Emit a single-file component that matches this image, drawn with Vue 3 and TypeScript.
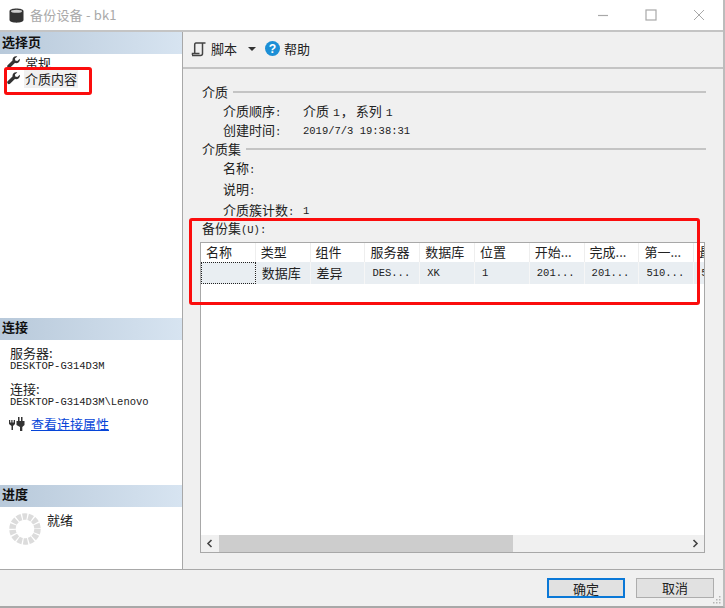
<script setup lang="ts">
interface Col { label: string; value: string; latin?: boolean }
const cols: Col[] = [
  { label: '名称', value: '' },
  { label: '类型', value: '数据库' },
  { label: '组件', value: '差异' },
  { label: '服务器', value: 'DES...', latin: true },
  { label: '数据库', value: 'XK', latin: true },
  { label: '位置', value: '1', latin: true },
  { label: '开始...', value: '201...', latin: true },
  { label: '完成...', value: '201...', latin: true },
  { label: '第一...', value: '510...', latin: true },
  { label: '最', value: '5', latin: true },
]
</script>

<template>
  <div class="window">
    <header class="titlebar">
      <svg width="15" height="15" viewBox="0 0 15 15">
        <path d="M0.500 3C0.500 -0.500 14.500 -0.500 14.500 3V12C14.500 15.500 0.500 15.500 0.500 12Z" fill="#333" />
        <ellipse cx="7.500" cy="3.200" rx="5.500" ry="1.500" fill="#cfcfcf" />
      </svg>
      <span class="title">备份设备 - bk1</span>
      <div class="winctl">
        <svg width="12" height="12" viewBox="0 0 12 12"><path d="M1 6.500H11" stroke="#a8a8a8" stroke-width="1.200" /></svg>
        <svg width="12" height="12" viewBox="0 0 12 12"><rect x="1" y="1" width="10" height="10" fill="none" stroke="#a8a8a8" stroke-width="1.200" /></svg>
        <svg width="12" height="12" viewBox="0 0 12 12"><path d="M1 1L11 11M11 1L1 11" stroke="#a8a8a8" stroke-width="1" /></svg>
      </div>
    </header>

    <div class="main">
      <aside class="side">
        <section class="pages">
          <h3 class="sidehead top">选择页</h3>
          <div class="navitem">
            <svg width="13" height="13" viewBox="0 0 13 13"><path d="M12.800 2.800 10.300 5 8.300 4.600 7.900 2.600 10.300 .4C7.600-.5 5.100 1.600 5.500 4.500L.6 9.300c-1.400 1.500.9 3.800 2.400 2.400L7.900 7C10.900 7.700 13.500 5.600 12.800 2.800Z" fill="#333" /></svg>
            <span>常规</span>
          </div>
          <div class="navitem second">
            <svg width="13" height="13" viewBox="0 0 13 13"><path d="M12.800 2.800 10.300 5 8.300 4.600 7.900 2.600 10.300 .4C7.600-.5 5.100 1.600 5.500 4.500L.6 9.300c-1.400 1.500.9 3.800 2.400 2.400L7.900 7C10.900 7.700 13.500 5.600 12.800 2.800Z" fill="#333" /></svg>
            <span class="selected">介质内容</span>
          </div>
        </section>

        <section class="conn">
          <h3 class="sidehead">连接</h3>
          <div class="connbody">
            <div class="k">服务器:</div>
            <div class="v">DESKTOP-G314D3M</div>
            <div class="k second">连接:</div>
            <div class="v">DESKTOP-G314D3M\Lenovo</div>
            <div class="linkrow">
              <svg width="16" height="14" viewBox="0 0 16 14" fill="#333">
                <path d="M0 3H1.200V5.500H2.300V3H3.500V5.500H4.700V3H6V7L4 9V13H2.500V9L0 7Z" />
                <path d="M9 0H10.500V4H12V0H13.500V4H15.500V8L13.300 10V14H11V10L7.500 8V4H9Z" />
              </svg>
              <a class="link">查看连接属性</a>
            </div>
          </div>
        </section>

        <section class="prog">
          <h3 class="sidehead">进度</h3>
          <div class="progbody">
            <svg width="32" height="32" viewBox="0 0 32 32">
              <circle cx="16" cy="16" r="12.500" fill="none" stroke="#dcdcdc" stroke-width="6.500" stroke-dasharray="4.400 1.210" />
            </svg>
            <span class="ready">就绪</span>
          </div>
        </section>
      </aside>

      <div class="right">
        <div class="toolbar">
          <svg class="scripticon" width="15" height="16" viewBox="0 0 15 16" fill="none" stroke="#444" stroke-width="1.500">
            <path d="M14.500 2H5C4 2 3.700 3 3.700 4V12.500" />
            <path d="M11.500 2V12.500C11.500 13.800 10.500 14.500 9.500 14.500H1C1.500 14.500 1.500 13 1.500 12.500H8.500" />
          </svg>
          <span>脚本</span>
          <i class="caret"></i>
          <svg width="15" height="15" viewBox="0 0 16 16">
            <circle cx="8" cy="8" r="8" fill="#1c8fd6" />
            <text x="8" y="13" text-anchor="middle" font-size="13" font-weight="700" fill="#fff" font-family="Liberation Sans, sans-serif">?</text>
          </svg>
          <span>帮助</span>
        </div>

        <div class="content">
          <div class="grouphead"><span>介质</span><i></i></div>
          <div class="line l1"><span class="lab">介质顺序<span class="mono">:</span></span><span class="val">介质 <span class="mono wide">1</span>，<span class="gap">系列</span> <span class="mono wide">1</span></span></div>
          <div class="line l2"><span class="lab">创建时间<span class="mono">:</span></span><span class="val mono">2019/7/3 19:38:31</span></div>
          <div class="grouphead g2"><span>介质集</span><i></i></div>
          <div class="line l3"><span class="lab">名称<span class="mono">:</span></span></div>
          <div class="line l3"><span class="lab">说明<span class="mono">:</span></span></div>
          <div class="line l3"><span class="lab">介质簇计数<span class="mono">:</span></span><span class="val mono">1</span></div>
          <div class="setlabel">备份集<span class="mono">(U):</span></div>

          <div class="table">
            <div class="thead">
              <div v-for="c in cols" :key="c.label" class="th">{{ c.label }}</div>
            </div>
            <div class="tbody">
              <div v-for="(c, i) in cols" :key="c.label" class="td" :class="{ focus: i === 0, mono: c.latin }">{{ c.value }}</div>
            </div>
            <div class="spacer"></div>
            <div class="scroll">
              <svg width="9" height="9" viewBox="0 0 9 9"><path d="M6 1 2.500 4.500 6 8" fill="none" stroke="#444" stroke-width="1.600" /></svg>
              <div class="track"><div class="thumb"></div></div>
              <svg width="9" height="9" viewBox="0 0 9 9"><path d="M3 1 6.500 4.500 3 8" fill="none" stroke="#444" stroke-width="1.600" /></svg>
            </div>
          </div>
        </div>
      </div>
    </div>

    <footer class="footer">
      <button class="btn primary">确定</button>
      <button class="btn">取消</button>
      <svg class="grip" width="10" height="10" viewBox="0 0 10 10" fill="#b5b5b5">
        <rect x="7" y="1" width="1.500" height="1.500" /><rect x="4" y="4" width="1.500" height="1.500" /><rect x="7" y="4" width="1.500" height="1.500" />
        <rect x="1" y="7" width="1.500" height="1.500" /><rect x="4" y="7" width="1.500" height="1.500" /><rect x="7" y="7" width="1.500" height="1.500" />
      </svg>
    </footer>

    <div class="mark mark-nav"></div>
    <div class="mark mark-table"></div>
  </div>
</template>

<style>
html, body { margin: 0; background: #fff; }
</style>

<style scoped>
.window {
  position: relative;
  width: 725px;
  height: 608px;
  box-sizing: border-box;
  overflow: hidden;
  display: flex;
  flex-direction: column;
  background: #fff;
  border-right: 2px solid #bcbcbc;
  border-bottom: 2px solid #a8a8a8;
  color: #222;
  font: 13px/18px "Noto Sans CJK SC", "Liberation Sans", sans-serif;
}
.titlebar {
  height: 32px;
  flex: none;
  display: flex;
  align-items: center;
  padding-left: 9px;
  box-sizing: border-box;
  border-bottom: 2px solid #c4c4c4;
}
.title { margin-left: 6px; font-size: 13px; color: #a9a9a9; letter-spacing: 0.2px; }
.winctl { margin-left: auto; display: flex; gap: 36px; padding-right: 18px; }
.main { flex: 1; min-height: 0; display: flex; }
.side {
  width: 183px;
  flex: none;
  box-sizing: border-box;
  border-right: 1px solid #a8a8a8;
  display: flex;
  flex-direction: column;
}
.sidehead {
  margin: 0;
  height: 22px;
  padding-left: 2px;
  font-size: 13px;
  line-height: 18px;
  font-weight: 700;
  color: #111;
  background: linear-gradient(90deg, #b8c9da, #d7e4f1);
}
.sidehead.top { line-height: 20px; }
.pages { height: 286px; flex: none; }
.navitem { display: flex; align-items: center; height: 17px; padding-left: 7px; gap: 5px; }
.navitem.second { margin-top: -1px; }
.selected { background: #f0f0f0; padding: 0 1px; margin-left: -1px; }
.conn { height: 167px; flex: none; }
.connbody { padding: 5px 0 0 10px; }
.k { height: 15px; line-height: 15px; }
.k.second { margin-top: 9px; }
.v { font: 10.500px/12px "Liberation Mono", monospace; color: #222; height: 12px; }
.linkrow { display: flex; align-items: center; gap: 6px; margin-top: 7px; margin-left: -1px; }
.link { color: #0645d8; text-decoration: underline; }
.prog { flex: 1; }
.progbody { display: flex; align-items: flex-start; padding: 6px 0 0 9px; gap: 6px; }
.ready { margin-top: -2px; }
.right { flex: 1; min-width: 0; background: #f0f0f0; display: flex; flex-direction: column; }
.toolbar {
  height: 37px;
  flex: none;
  box-sizing: border-box;
  border-bottom: 2px solid #c4c4c4;
  display: flex;
  align-items: center;
  gap: 4px;
  padding: 0 0 2px 8px;
}
.scripticon { margin-right: 1px; }
.caret { width: 0; height: 0; margin: 0 5px 0 7px; border: 4px solid transparent; border-top: 4px solid #333; border-bottom: 0; }
.content { flex: 1; min-height: 0; padding: 14px 0 0 19px; display: flex; flex-direction: column; }
.grouphead { display: flex; align-items: center; height: 18px; gap: 5px; padding-right: 17px; }
.grouphead i { flex: 1; height: 2px; background: #c4c4c4; }
.line { display: flex; align-items: center; padding-left: 21px; }
.l1 { height: 21px; }
.l2 { height: 18px; }
.l3 { height: 21px; }
.lab { width: 80px; flex: none; }
.val { white-space: pre; }
.gap { margin-left: 2px; }
.mono { font: 10.500px/18px "Liberation Mono", monospace; }
.wide { font-size: 11.500px; margin: 0 1px; }
.setlabel { height: 21px; line-height: 14px; }
.table {
  width: 505px;
  height: 311px;
  box-sizing: border-box;
  margin-left: -2px;
  border: 1px solid #a8a8a8;
  background: #fff;
  display: flex;
  flex-direction: column;
  overflow: hidden;
}
.thead, .tbody { display: grid; grid-template-columns: repeat(10, 54.800px); flex: none; }
.thead { height: 19px; }
.th { padding-left: 5px; box-sizing: border-box; border-right: 1px solid #eee; line-height: 17px; white-space: nowrap; overflow: hidden; }
.tbody { height: 22px; background: #e9eef2; }
.td { padding-left: 6px; box-sizing: border-box; border-right: 1px solid #f6f6f6; line-height: 21px; white-space: nowrap; overflow: hidden; }
.td.mono { line-height: 22px; padding-left: 7px; }
.focus { outline: 1px dotted #222; outline-offset: -1px; }
.spacer { flex: 1; }
.scroll { height: 17px; flex: none; background: #f0f0f0; display: flex; align-items: center; }
.scroll svg { width: 18px; flex: none; height: 9px; }
.track { flex: 1; height: 17px; }
.thumb { width: 294px; height: 17px; background: #cdcdcd; }
.footer {
  height: 37px;
  flex: none;
  box-sizing: border-box;
  position: relative;
  background: #f0f0f0;
  border-top: 1px solid #a8a8a8;
  display: flex;
  align-items: flex-start;
  justify-content: flex-end;
  gap: 11px;
  padding: 8px 9px 0 0;
}
.btn {
  width: 78px;
  height: 20px;
  box-sizing: border-box;
  padding: 0;
  border: 1px solid #adadad;
  background: #e1e1e1;
  color: #222;
  font: 13px/18px "Noto Sans CJK SC", sans-serif;
}
.btn.primary { border: 2px solid #0a78d7; }
.grip { position: absolute; right: 1px; bottom: 1px; }
.mark { position: absolute; box-sizing: border-box; border: 3px solid #fb0d0d; border-radius: 3px; pointer-events: none; }
.mark-nav { left: 4px; top: 67px; width: 88px; height: 28px; }
.mark-table { left: 189px; top: 218px; width: 511px; height: 87px; }
</style>
